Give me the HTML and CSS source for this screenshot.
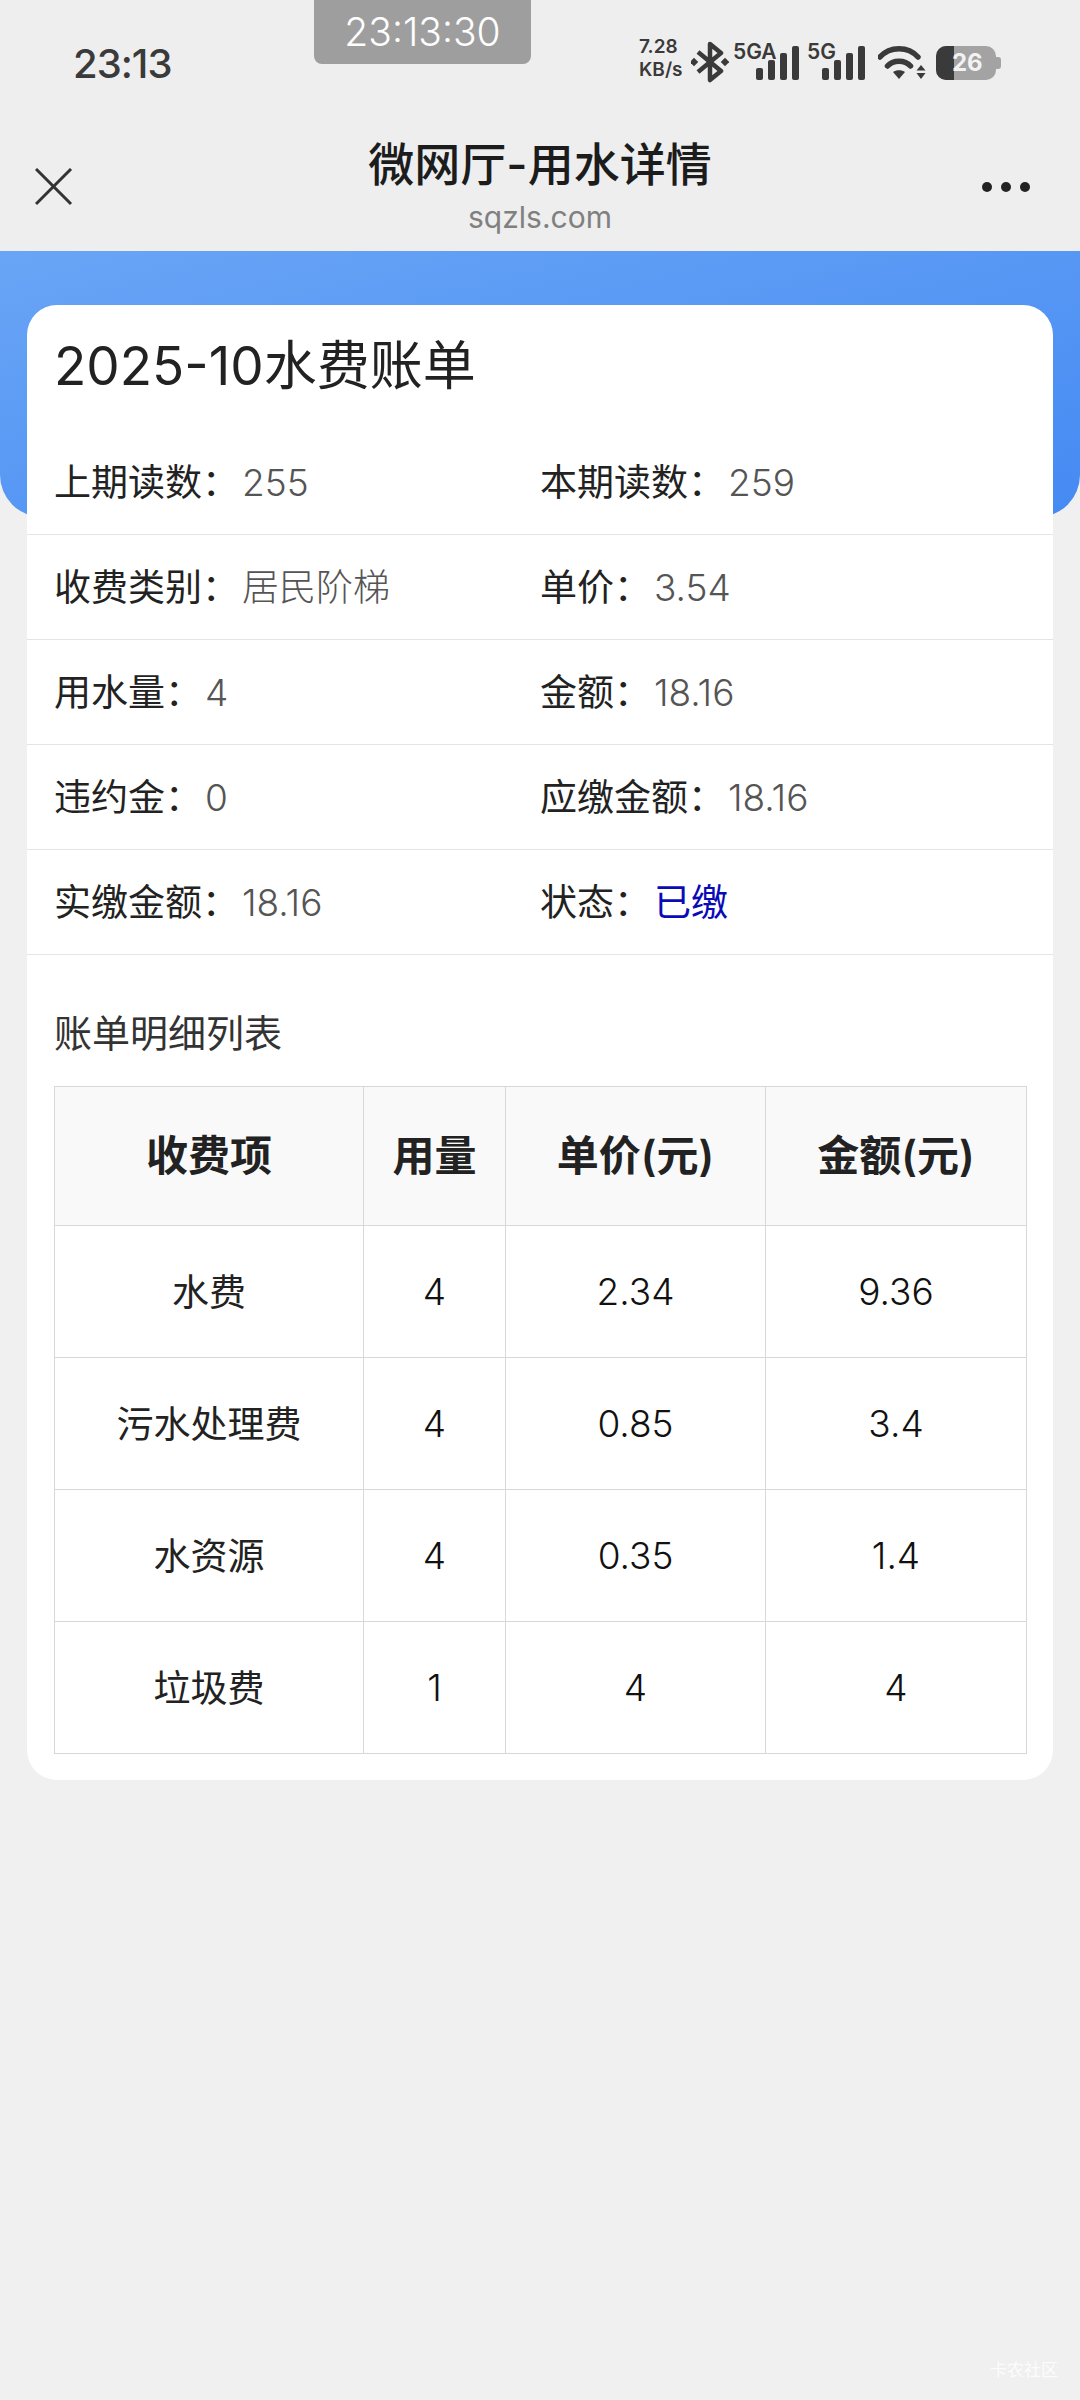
FILE: index.html
```html
<!DOCTYPE html>
<html lang="zh-CN">
<head>
  <meta charset="UTF-8" />
  <meta name="viewport" content="width=device-width, initial-scale=1.0"/>
  <title>微网厅-用水详情</title>
  <link rel="stylesheet" href="styles.css">
</head>
<body>
  <div class="toast">23:13:30</div>

  <header class="topbar">
    <div class="status">
      <span class="clock">23:13</span>
      <div class="status-icons">
        <span class="speed">7.28<br>KB/s</span>
        <svg class="bt" width="38" height="42" viewBox="0 0 38 42">
          <path d="M7 11 L30 30 L19 39 V3 L30 12 L7 31" fill="none" stroke="#3a3a3a" stroke-width="4.5" stroke-linejoin="round"/>
          <rect x="0" y="18" width="6" height="6" transform="rotate(45 3 21)" fill="#3a3a3a"/>
          <rect x="31" y="18" width="6" height="6" transform="rotate(45 34 21)" fill="#3a3a3a"/>
        </svg>
        <div class="signal sig-5ga">
          <span class="net">5GA</span>
          <svg width="44" height="34" viewBox="0 0 44 34">
            <rect x="0" y="22" width="7" height="12" rx="2" fill="#3a3a3a"/>
            <rect x="12" y="14" width="7" height="20" rx="2" fill="#3a3a3a"/>
            <rect x="24" y="7" width="7" height="27" rx="2" fill="#3a3a3a"/>
            <rect x="36" y="0" width="7" height="34" rx="2" fill="#3a3a3a"/>
          </svg>
        </div>
        <div class="signal sig-5g">
          <span class="net">5G</span>
          <svg width="44" height="34" viewBox="0 0 44 34">
            <rect x="0" y="22" width="7" height="12" rx="2" fill="#3a3a3a"/>
            <rect x="12" y="14" width="7" height="20" rx="2" fill="#3a3a3a"/>
            <rect x="24" y="7" width="7" height="27" rx="2" fill="#3a3a3a"/>
            <rect x="36" y="0" width="7" height="34" rx="2" fill="#3a3a3a"/>
          </svg>
        </div>
        <svg class="wifi" width="48" height="34" viewBox="0 0 48 34">
          <path d="M2 11 C12 0 30 0 40 11" fill="none" stroke="#3a3a3a" stroke-width="5.5" stroke-linecap="round"/>
          <path d="M9.5 20 C15 13.5 27 13.5 32.500 20" fill="none" stroke="#3a3a3a" stroke-width="5.5" stroke-linecap="round"/>
          <path d="M15 26 C18 23.500 24 23.500 27 26 L21 33 Z" fill="#3a3a3a"/>
          <path d="M43 19 L47.500 24.500 H38.500 Z M38.500 27 H47.500 L43 33 Z" fill="#3a3a3a"/>
        </svg>
        <div class="battery"><span class="battery-num">26</span></div>
      </div>
    </div>
    <div class="navbar">
      <svg class="close" width="38" height="38" viewBox="0 0 38 38">
        <path d="M1 1 L36 36 M36 1 L1 36" stroke="#333" stroke-width="3" fill="none"/>
      </svg>
      <div class="nav-title">
        <div class="page-name">微网厅-用水详情</div>
        <div class="page-host">sqzls.com</div>
      </div>
      <div class="more"><i></i><i></i><i></i></div>
    </div>
  </header>

  <div class="banner"></div>

  <main class="card">
    <h1 class="bill-title">2025-10水费账单</h1>

    <div class="info-row">
      <div class="info"><span class="label">上期读数：</span><span class="value">255</span></div>
      <div class="info"><span class="label">本期读数：</span><span class="value">259</span></div>
    </div>
    <div class="info-row">
      <div class="info"><span class="label">收费类别：</span><span class="value">居民阶梯</span></div>
      <div class="info"><span class="label">单价：</span><span class="value">3.54</span></div>
    </div>
    <div class="info-row">
      <div class="info"><span class="label">用水量：</span><span class="value">4</span></div>
      <div class="info"><span class="label">金额：</span><span class="value">18.16</span></div>
    </div>
    <div class="info-row">
      <div class="info"><span class="label">违约金：</span><span class="value">0</span></div>
      <div class="info"><span class="label">应缴金额：</span><span class="value">18.16</span></div>
    </div>
    <div class="info-row">
      <div class="info"><span class="label">实缴金额：</span><span class="value">18.16</span></div>
      <div class="info"><span class="label">状态：</span><span class="value paid">已缴</span></div>
    </div>

    <h2 class="list-title">账单明细列表</h2>

    <table class="detail-table">
      <colgroup>
        <col class="col-item">
        <col class="col-qty">
        <col class="col-price">
        <col class="col-amount">
      </colgroup>
      <thead>
        <tr>
          <th>收费项</th>
          <th>用量</th>
          <th>单价(元)</th>
          <th>金额(元)</th>
        </tr>
      </thead>
      <tbody>
        <tr>
          <td>水费</td>
          <td>4</td>
          <td>2.34</td>
          <td>9.36</td>
        </tr>
        <tr>
          <td>污水处理费</td>
          <td>4</td>
          <td>0.85</td>
          <td>3.4</td>
        </tr>
        <tr>
          <td>水资源</td>
          <td>4</td>
          <td>0.35</td>
          <td>1.4</td>
        </tr>
        <tr>
          <td>垃圾费</td>
          <td>1</td>
          <td>4</td>
          <td>4</td>
        </tr>
      </tbody>
    </table>
  </main>

  <div class="watermark">卡农社区</div>
</body>
</html>
```

FILE: styles.css
```css
html, body {
  height: 2400px;
}

body {
  font-family: Inter, "Noto Sans CJK SC", sans-serif;
  background: #f0f0f0;
  margin: 0;
  padding: 0;
  color: #222;
  overflow: hidden;
  position: relative;
}

.toast {
  position: absolute;
  top: 0;
  left: 314px;
  width: 217px;
  height: 64px;
  background: #9e9e9e;
  border-radius: 0 0 8px 8px;
  color: #fff;
  font-size: 39px;
  font-weight: 300;
  line-height: 64px;
  text-align: center;
}

.topbar {
  height: 251px;
  background: #eeeeee;
  overflow: hidden;
}

.status {
  display: flex;
  justify-content: space-between;
  align-items: center;
  height: 34px;
  padding: 46px 84px 0 73px;
}

.clock {
  font-size: 40px;
  font-weight: 500;
  letter-spacing: -1px;
  color: #3a3a3a;
}

.status-icons {
  display: flex;
  align-items: flex-end;
  height: 40px;
  margin-bottom: 6px;
}

.speed {
  width: 52px;
  font-size: 19px;
  font-weight: 600;
  line-height: 23px;
  color: #3a3a3a;
  margin-bottom: -1px;
}

.bt {
  margin-bottom: -3px;
}

.signal {
  display: flex;
  align-items: flex-end;
  height: 38px;
}

.sig-5ga {
  margin-left: 4px;
}

.sig-5g {
  margin-left: 7px;
}

.net {
  font-size: 21px;
  font-weight: 600;
  color: #3a3a3a;
  line-height: 20px;
  align-self: flex-start;
  white-space: nowrap;
}

.sig-5ga .net {
  width: 23px;
}

.sig-5g .net {
  width: 15px;
}

.wifi {
  margin-left: 12px;
}

.battery {
  position: relative;
  width: 60px;
  height: 34px;
  margin-left: 10px;
  background: #a3a3a3;
  border-radius: 10px;
  overflow: visible;
}

.battery::before {
  content: "";
  position: absolute;
  left: 0;
  top: 0;
  width: 18px;
  height: 34px;
  background: #3a3a3a;
  border-radius: 10px 0 0 10px;
}

.battery::after {
  content: "";
  position: absolute;
  right: -5px;
  top: 11px;
  width: 5px;
  height: 12px;
  background: #a3a3a3;
  border-radius: 0 3px 3px 0;
}

.battery-num {
  position: absolute;
  left: 16px;
  top: 0;
  font-size: 24px;
  font-weight: 700;
  line-height: 34px;
  color: #f2f2f2;
}

.navbar {
  display: grid;
  grid-template-columns: 1fr auto 1fr;
  align-items: center;
  height: 100px;
  padding: 57px 35px 0;
}

.close {
  justify-self: start;
}

.nav-title {
  text-align: center;
  margin-top: -4px;
}

.page-name {
  font-size: 46px;
  font-weight: 500;
  line-height: 60px;
  color: #1c1c1c;
}

.page-host {
  margin-top: 4px;
  font-size: 30px;
  line-height: 38px;
  color: #808080;
}

.more {
  display: flex;
  gap: 9px;
  justify-self: end;
  margin-right: 15px;
}

.more i {
  display: block;
  width: 10px;
  height: 10px;
  border-radius: 50%;
  background: #222;
}

.banner {
  height: 266px;
  background: linear-gradient(to bottom right, #69a5f6, #458af3);
  border-radius: 0 0 42px 42px;
}

.card {
  background: white;
  margin: -212px 27px 0;
  padding-bottom: 26px;
  border-radius: 30px;
  position: relative;
}

.bill-title {
  margin: 0;
  height: 125px;
  padding: 0 27px;
  font-size: 53px;
  font-weight: 400;
  line-height: 122px;
  color: #222;
}

.info-row {
  display: flex;
  align-items: center;
  height: 100px;
  padding: 0 27px 4px;
  border-bottom: 1px solid #e4e4e4;
}

.info {
  display: flex;
  align-items: baseline;
  width: 487px;
  font-size: 37px;
  font-weight: 300;
}

.label {
  color: #222;
  font-weight: 400;
  margin-right: 3px;
}

.value {
  color: #555;
}

.value.paid {
  color: #0a0ab8;
  font-weight: 400;
}

.list-title {
  margin: 0;
  padding: 52px 27px 27px;
  font-size: 38px;
  font-weight: 400;
  line-height: 52px;
  color: #333;
}

.detail-table {
  width: 972px;
  margin-left: 27px;
  border-collapse: collapse;
  table-layout: fixed;
}

.col-item {
  width: 309px;
}

.col-qty {
  width: 142px;
}

.col-price {
  width: 260px;
}

.col-amount {
  width: 261px;
}

.detail-table th, .detail-table td {
  border: 1px solid #d8d8d8;
  padding: 0;
  text-align: center;
  font-size: 37px;
  font-weight: 300;
  color: #111;
}

.detail-table th {
  height: 130px;
  padding-bottom: 8px;
  background-color: #f9f9f9;
  font-size: 42px;
  font-weight: 600;
  color: #222;
}

.detail-table td {
  height: 131px;
}

.detail-table td:first-child {
  height: 128px;
  padding-bottom: 3px;
  font-weight: 400;
  color: #222;
}

.watermark {
  position: absolute;
  right: 22px;
  top: 2356px;
  font-size: 17px;
  color: rgba(255, 255, 255, 0.85);
}
```
